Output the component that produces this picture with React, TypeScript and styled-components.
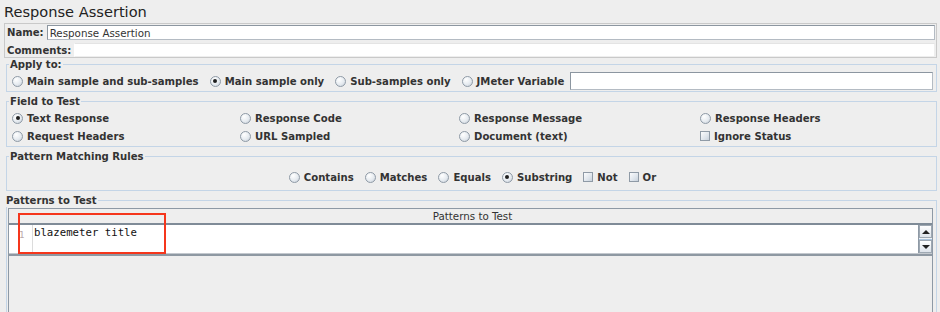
import React from 'react';
import styled, {createGlobalStyle} from 'styled-components';

const GlobalStyle = createGlobalStyle`
    html, body {
        margin: 0;
        padding: 0;
        background: #eeeeee;
    }
    * {
        box-sizing: border-box;
    }
`;

const Page = styled.div`
    width: 940px;
    height: 312px;
    overflow: hidden;
    background: #eeeeee;
    font-family: "DejaVu Sans", sans-serif;
    font-size: 10.3px;
    color: #333333;
    display: flex;
    flex-direction: column;
`;

const Title = styled.div`
    height: 23px;
    line-height: 23px;
    padding-left: 4px;
    font-size: 14.6px;
    color: #222222;
`;

const NamePanel = styled.div`
    margin: 0 3px 0 4px;
    border: 1px solid #c9c9c9;
    padding: 1px 1px 0 1px;
    display: flex;
    flex-direction: column;
    gap: 3px;
`;

const FieldRow = styled.div<{$h: number}>`
    display: flex;
    align-items: center;
    gap: 3px;
    height: ${p => p.$h}px;
`;

const FieldLabel = styled.span`
    font-weight: bold;
    font-size: 10.1px;
    padding-left: 1px;
    white-space: nowrap;
`;

const TextBox = styled.div<{$plain?: boolean}>`
    flex: 1;
    align-self: stretch;
    background: #ffffff;
    border: 1px solid ${p => (p.$plain ? '#eeeeee' : '#b4bbc3')};
    border-top-color: ${p => (p.$plain ? '#e4e4e4' : '#8c96a0')};
    border-left-color: ${p => (p.$plain ? '#ffffff' : '#8c96a0')};
    padding: 0 2px;
    display: flex;
    align-items: center;
    white-space: nowrap;
    color: #333333;
`;

const Group = styled.fieldset<{$pad: string; $fill?: boolean}>`
    margin: 3px 3px 0 6px;
    border: 1px solid #c4d5e7;
    padding: ${p => p.$pad};
    min-width: 0;
    ${p => (p.$fill ? 'flex: 1; min-height: 140px;' : '')}

    &:first-of-type {
        margin-top: 0;
    }
`;

const Legend = styled.legend`
    font-weight: bold;
    font-size: 10.1px;
    line-height: 12px;
    padding: 1px 1px 0;
    margin-left: -3px;
    color: #333333;
`;

const OptionRow = styled.div<{$center?: boolean}>`
    display: flex;
    align-items: center;
    gap: 11px;
    height: 18px;
    justify-content: ${p => (p.$center ? 'center' : 'flex-start')};
`;

const OptionGrid = styled.div`
    display: grid;
    grid-template-columns: 228px 219px 241px 1fr;
    grid-auto-rows: 18px;
    align-items: center;
`;

const Option = styled.label`
    display: inline-flex;
    align-items: center;
    gap: 4px;
    font-weight: bold;
    font-size: 10.1px;
    white-space: nowrap;
`;

const Radio = styled.span<{$on?: boolean}>`
    width: 11px;
    height: 11px;
    border-radius: 50%;
    border: 1px solid #8f9aa6;
    background: radial-gradient(circle at 35% 30%, #ffffff 0%, #e6ebf0 55%, #c4ccd6 100%);
    display: inline-flex;
    align-items: center;
    justify-content: center;
    flex: none;

    &::after {
        content: '';
        width: 4px;
        height: 4px;
        border-radius: 50%;
        background: #1f1f1f;
        display: ${p => (p.$on ? 'block' : 'none')};
    }
`;

const Check = styled.span`
    width: 10px;
    height: 10px;
    border: 1px solid #8f9aa6;
    background: linear-gradient(135deg, #fbfcfd 0%, #dfe5ec 60%, #c8d1db 100%);
    flex: none;
`;

const VarField = styled(TextBox)`
    height: 18px;
    flex: 1;
    align-self: center;
    margin-left: -5px;
`;

const TableBox = styled.div`
    position: relative;
    height: 160px;
    border: 1px solid #8e99a5;
    border-bottom: none;
    display: flex;
    flex-direction: column;
`;

const TableHeader = styled.div`
    height: 16px;
    border-bottom: 2px solid #7f8b97;
    background: #eeeeee;
    display: flex;
    align-items: center;
    justify-content: center;
    padding-left: 4px;
    color: #333333;
`;

const TableRow = styled.div`
    height: 29px;
    display: flex;
    background: #ffffff;
    border-bottom: 1px solid #c3c8ce;
`;

const RowRule = styled.div`
    height: 2px;
    background: #8e98a2;
`;

const Gutter = styled.div`
    width: 24px;
    border-right: 1px solid #dcdcdc;
    padding: 3px 0 0 10px;
    font-family: "DejaVu Sans Mono", monospace;
    font-size: 9px;
    line-height: 14px;
    color: #b9a9a9;
`;

const Code = styled.div`
    flex: 1;
    padding: 1px 0 0 1px;
    font-family: "DejaVu Sans Mono", monospace;
    font-size: 10.7px;
    line-height: 14px;
    color: #111111;
`;

const ScrollBar = styled.div`
    width: 14px;
    display: flex;
    flex-direction: column;
    border-left: 1px solid #8e99a5;
    background: #eef1f4;
`;

const ScrollButton = styled.div`
    height: 13px;
    border: 1px solid #9ea8b2;
    background: linear-gradient(#ffffff, #dde3ea);
    display: flex;
    align-items: center;
    justify-content: center;
`;

const Track = styled.div`
    flex: 1;
    display: flex;
    align-items: center;

    &::after {
        content: '';
        height: 1px;
        width: 100%;
        background: #a9c3dd;
    }
`;

const Arrow = styled.span<{$up?: boolean}>`
    width: 0;
    height: 0;
    border-left: 4px solid transparent;
    border-right: 4px solid transparent;
    ${p => (p.$up ? 'border-bottom: 4px solid #222;' : 'border-top: 4px solid #222;')}
`;

const Highlight = styled.div`
    position: absolute;
    left: 9px;
    top: 4px;
    width: 148px;
    height: 41px;
    border: 2px solid #f5361c;
    pointer-events: none;
`;

const fieldOptions = [
    {label: 'Text Response', on: true},
    {label: 'Response Code'},
    {label: 'Response Message'},
    {label: 'Response Headers'},
    {label: 'Request Headers'},
    {label: 'URL Sampled'},
    {label: 'Document (text)'},
    {label: 'Ignore Status', check: true},
];

export default function App() {
    return (
        <Page>
            <GlobalStyle/>
            <Title>{'Response Assertion'}</Title>
            <NamePanel>
                <FieldRow $h={15}>
                    <FieldLabel>{'Name:'}</FieldLabel>
                    <TextBox>{'Response Assertion'}</TextBox>
                </FieldRow>
                <FieldRow $h={14}>
                    <FieldLabel>{'Comments:'}</FieldLabel>
                    <TextBox $plain/>
                </FieldRow>
            </NamePanel>

            <Group $pad="1px 3px 1px 5px">
                <Legend>{'Apply to:'}</Legend>
                <OptionRow>
                    <Option><Radio/>{'Main sample and sub-samples'}</Option>
                    <Option><Radio $on/>{'Main sample only'}</Option>
                    <Option><Radio/>{'Sub-samples only'}</Option>
                    <Option><Radio/>{'JMeter Variable'}</Option>
                    <VarField/>
                </OptionRow>
            </Group>

            <Group $pad="1px 3px 1px 5px">
                <Legend>{'Field to Test'}</Legend>
                <OptionGrid>
                    {fieldOptions.map(o => (
                        <Option key={o.label}>
                            {o.check ? <Check/> : <Radio $on={o.on}/>}
                            {o.label}
                        </Option>
                    ))}
                </OptionGrid>
            </Group>

            <Group $pad="5px 3px 4px 5px">
                <Legend>{'Pattern Matching Rules'}</Legend>
                <OptionRow $center>
                    <Option><Radio/>{'Contains'}</Option>
                    <Option><Radio/>{'Matches'}</Option>
                    <Option><Radio/>{'Equals'}</Option>
                    <Option><Radio $on/>{'Substring'}</Option>
                    <Option><Check/>{'Not'}</Option>
                    <Option><Check/>{'Or'}</Option>
                </OptionRow>
            </Group>

            <Group $pad="1px 3px 0 1px" $fill>
                <Legend>{'Patterns to Test'}</Legend>
                <TableBox>
                    <TableHeader>{'Patterns to Test'}</TableHeader>
                    <TableRow>
                        <Gutter>{'1'}</Gutter>
                        <Code>{'blazemeter title'}</Code>
                        <ScrollBar>
                            <ScrollButton><Arrow $up/></ScrollButton>
                            <Track/>
                            <ScrollButton><Arrow/></ScrollButton>
                        </ScrollBar>
                    </TableRow>
                    <RowRule/>
                    <Highlight/>
                </TableBox>
            </Group>
        </Page>
    );
}
